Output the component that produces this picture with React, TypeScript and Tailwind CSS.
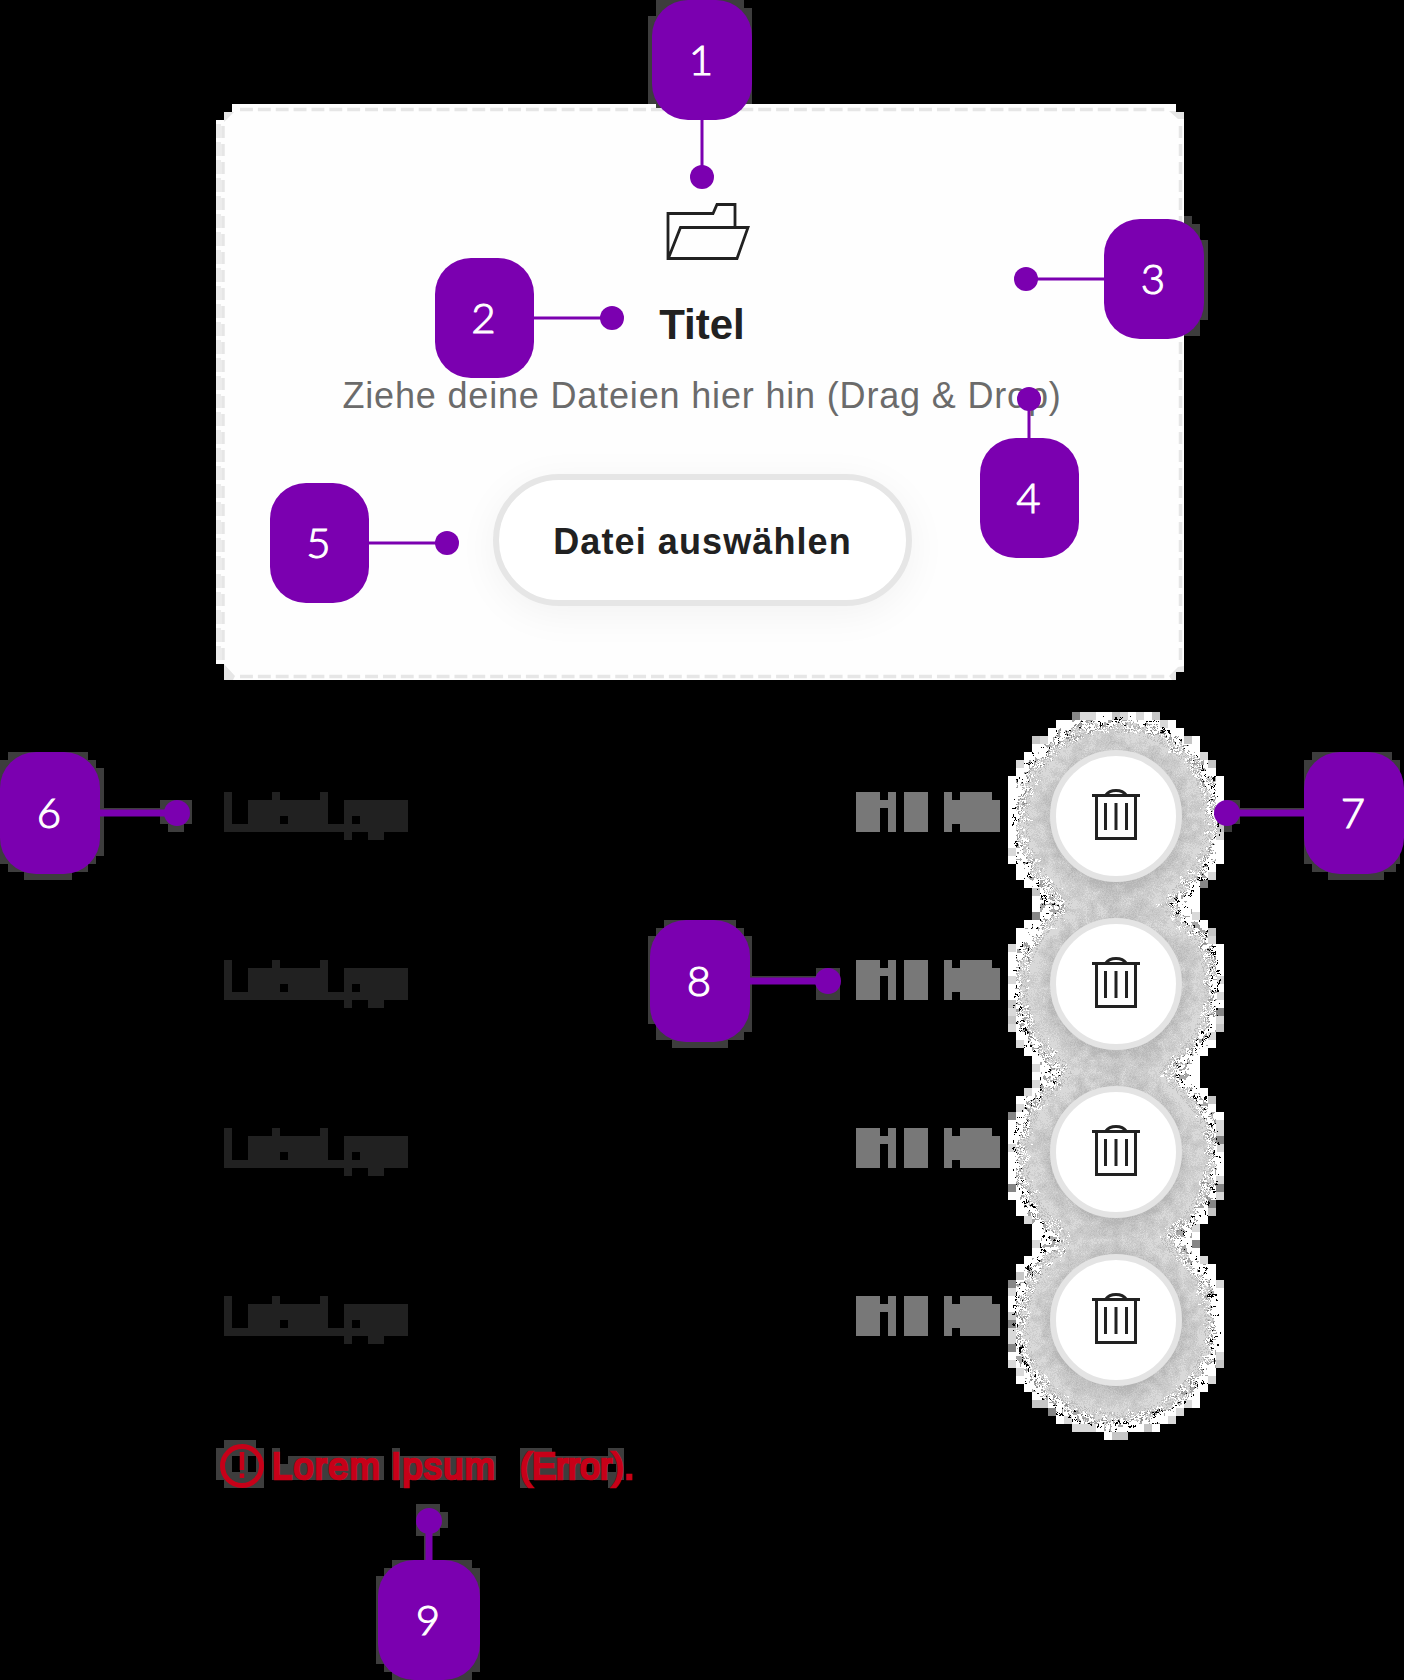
import { useMemo } from "react";

type Side = "top" | "right" | "bottom" | "left";

interface Marker {
  n: number;
  x: number;
  y: number;
  w: number;
  h: number;
  side: Side;
  dot: [number, number];
  line: number;
  r: number;
  halo?: [number, number, number, number][];
}

const MARKERS: Marker[] = [
  { n: 1, x: 652, y: 0, w: 100, h: 120, side: "bottom", dot: [702, 177], line: 3, r: 12,
    halo: [[648, 16, 104, 88], [656, 8, 96, 96], [656, 0, 88, 8], [744, 8, 8, 96], [656, 104, 16, 4]] },
  { n: 2, x: 435, y: 258, w: 99, h: 120, side: "right", dot: [612, 318], line: 3, r: 12 },
  { n: 3, x: 1104, y: 219, w: 100, h: 120, side: "left", dot: [1026, 279], line: 3, r: 12,
    halo: [[1184, 216, 8, 8], [1184, 224, 16, 112], [1200, 240, 8, 80]] },
  { n: 4, x: 980, y: 438, w: 99, h: 120, side: "top", dot: [1029, 399], line: 3, r: 12 },
  { n: 5, x: 270, y: 483, w: 99, h: 120, side: "right", dot: [447, 543], line: 3, r: 12 },
  { n: 6, x: 0, y: 752, w: 100, h: 122, side: "right", dot: [177, 813], line: 7, r: 13,
    halo: [[8, 752, 80, 8], [0, 760, 96, 8], [0, 768, 104, 88], [0, 856, 96, 8], [8, 864, 80, 8], [24, 872, 48, 8], [100, 808, 70, 8], [160, 800, 32, 24], [168, 824, 16, 8]] },
  { n: 7, x: 1304, y: 752, w: 100, h: 122, side: "left", dot: [1227, 813], line: 7, r: 13,
    halo: [[1312, 752, 80, 8], [1304, 760, 96, 104], [1312, 864, 84, 8], [1328, 872, 56, 8], [1224, 800, 16, 24], [1224, 824, 8, 8], [1240, 808, 64, 8]] },
  { n: 8, x: 650, y: 920, w: 100, h: 122, side: "right", dot: [828, 981], line: 7, r: 13,
    halo: [[664, 920, 72, 8], [656, 928, 88, 8], [648, 936, 104, 88], [656, 1024, 96, 8], [656, 1032, 88, 8], [672, 1040, 56, 8], [750, 976, 70, 8], [816, 968, 24, 32]] },
  { n: 9, x: 378, y: 1560, w: 102, h: 120, side: "top", dot: [429, 1521], line: 7, r: 13,
    halo: [[392, 1560, 80, 8], [384, 1568, 96, 8], [376, 1576, 104, 88], [384, 1664, 96, 8], [392, 1672, 80, 8], [416, 1504, 24, 32], [440, 1512, 8, 16], [424, 1536, 8, 24]] },
];

function stem(m: Marker): string {
  const cx = m.x + m.w / 2;
  const cy = m.y + m.h / 2;
  return m.side === "left" || m.side === "right"
    ? `M${cx} ${m.dot[1]}H${m.dot[0]}`
    : `M${m.dot[0]} ${cy}V${m.dot[1]}`;
}

function Markers() {
  return (
    <>
      <svg className="pointer-events-none absolute inset-0" width="1404" height="1680">
        {MARKERS.map((m) => (
          <g key={m.n}>
            {m.halo?.map(([x, y, w, h], i) => (
              <rect key={i} x={x} y={y} width={w} height={h} fill="#3d3d3d" shapeRendering="crispEdges" />
            ))}
            <path d={stem(m)} stroke="#7b00b0" strokeWidth={m.line} />
            <circle cx={m.dot[0]} cy={m.dot[1]} r={m.r} fill="#7b00b0" />
          </g>
        ))}
      </svg>
      {MARKERS.map((m) => (
        <div
          key={m.n}
          className="absolute flex items-center justify-center rounded-[36px] bg-[#7b00b0] pr-[2px] pb-[2px] font-[Lato,sans-serif] text-[42px] leading-none font-light text-white [-webkit-text-stroke:1.1px_#ffffff]"
          style={{ left: m.x, top: m.y, width: m.w, height: m.h }}
        >
          {m.n}
        </div>
      ))}
    </>
  );
}

function FolderIcon() {
  return (
    <svg className="h-[60px] w-[90px] overflow-visible" viewBox="0 0 90 60" fill="none" stroke="#212121" strokeWidth="2.8">
      <path d="M78 26V2.500H60L56 11.500H11V56.500H80L91 25.500H23.500L11.500 56" />
    </svg>
  );
}

function TrashIcon() {
  return (
    <svg className="h-[54px] w-[48px]" viewBox="0 0 48 54" fill="none" stroke="#212121" strokeWidth="3">
      <path d="M0 6.500H48M4.500 6.500V49.500H43.500V6.500M13.500 14V41M24 14V41M34.500 14V41" />
      <path d="M13.800 6C18 0 30 0 34.200 6" />
    </svg>
  );
}

function AlertIcon() {
  return (
    <svg className="h-[48px] w-[56px] shrink-0" viewBox="0 0 56 48" fill="none">
      <path d="M8 0H40V8H48V48H8V40H0V8H8Z" fill="#3d3d3d" />
      <path d="M16 16H24V32H16ZM32 16H40V32H32Z" fill="#000" />
      <circle cx="26" cy="26" r="19.500" stroke="#c70018" strokeWidth="5" />
      <path d="M26 12V30M26 33.500V38" stroke="#c70018" strokeWidth="4.500" />
    </svg>
  );
}

function rand(x: number, y: number): number {
  let h = Math.imul(x, 374761393) ^ Math.imul(y, 668265263);
  h = Math.imul(h ^ (h >>> 13), 1274126177);
  return ((h ^ (h >>> 16)) >>> 0) / 4294967295;
}

function smooth(x: number, y: number, s: number): number {
  const gx = Math.floor(x / s);
  const gy = Math.floor(y / s);
  const fx = x / s - gx;
  const fy = y / s - gy;
  const a = rand(gx, gy) * (1 - fx) + rand(gx + 1, gy) * fx;
  const b = rand(gx, gy + 1) * (1 - fx) + rand(gx + 1, gy + 1) * fx;
  return a * (1 - fy) + b * fy;
}

const SHADES = ["#000000", "#868686", "#a6a6a6", "#bdbdbd", "#c6c6c6", "#cecece", "#d9d9d9", "#ffffff"];
const GLOW_CENTERS = [108, 276, 444, 612];

// Grainy glow around the delete buttons, built from one-pixel runs per shade.
function Glow() {
  const paths = useMemo(() => {
    const out: string[][] = SHADES.map(() => []);
    const near = (x: number, y: number) =>
      Math.min(...GLOW_CENTERS.map((c) => Math.hypot(x - 108, y - c)));
    const mask: boolean[] = [];
    for (let r = 0; r < 91; r++)
      for (let c = 0; c < 27; c++) {
        let hit = false;
        for (const cy of GLOW_CENTERS) {
          const nx = Math.max(c * 8, Math.min(108, c * 8 + 8));
          const ny = Math.max(r * 8, Math.min(cy, r * 8 + 8));
          if (Math.hypot(nx - 108, ny - cy) < 107.8) hit = true;
        }
        if (r === 90) hit = c >= 12 && c <= 14;
        mask.push(hit);
      }
    const inside = (x: number, y: number) => {
      const c = Math.floor(x / 8);
      const r = Math.floor(y / 8);
      return c >= 0 && c < 27 && r >= 0 && r < 91 && mask[r * 27 + c];
    };
    for (let y = 0; y < 728; y++) {
      let start = 0;
      let cur = -1;
      for (let x = 0; x <= 216; x++) {
        let s = -1;
        if (x < 216 && inside(x, y)) {
          // Overlapping glows reinforce each other between two buttons.
          const sorted = GLOW_CENTERS.map((c) => Math.hypot(x - 108, y - c)).sort((a, b) => a - b);
          const d = near(x, y) - Math.max(0, 112 - sorted[1]) * 0.35;
          const n = rand(x, y);
          const edge = !inside(x - 8, y) || !inside(x + 8, y) || !inside(x, y - 8) || !inside(x, y + 8);
          const t = (d - 86) / 20 + (smooth(x, y, 4) - 0.5) * 0.9 + (n - 0.5) * 0.25;
          if (edge && d > 101) {
            const k = rand((x >> 3) + 91, (y >> 3) + 17);
            s = k > 0.42 ? 7 : k > 0.2 ? 6 : k > 0.08 ? 4 : 1;
            if (d < 105 && smooth(x + 400, y, 3) > 0.66 && n > 0.5) s = 0;
          } else if (t > 0.62) {
            s = d > 95 && smooth(x + 400, y, 3) > 0.7 && n > 0.5 ? 0 : smooth(x, y + 300, 3) > 0.72 ? 2 : 7;
          } else if (t > 0.4) {
            s = n > 0.62 ? 7 : n > 0.38 ? 6 : n > 0.16 ? 2 : 1;
          } else {
            const v = smooth(x, y, 6) * 0.6 + n * 0.4 + (d - 78) / 60;
            s = v < 0.2 ? 3 : v < 0.42 ? 4 : v < 0.65 ? 5 : 6;
            if (d > 88 && v > 0.4 && n < 0.3) s = 3;
          }
        }
        if (s !== cur) {
          if (cur >= 0) out[cur].push(`M${start} ${y}h${x - start}v1h-${x - start}z`);
          start = x;
          cur = s;
        }
      }
    }
    return out.map((p) => p.join(""));
  }, []);
  return (
    <svg className="pointer-events-none absolute top-[-20px] left-[792px]" width="216" height="728" shapeRendering="crispEdges">
      {paths.map((d, i) => (
        <path key={i} d={d} fill={SHADES[i]} />
      ))}
    </svg>
  );
}

function FileRow() {
  return (
    <div className="relative flex h-[168px] items-center">
      <div className="flex h-[48px] w-[184px] items-center bg-[#212121] pb-[10px] text-[40px] leading-none tracking-[1px] text-[#212121] [clip-path:path(evenodd,'M0,0H8V32H24V8H48V0H56V8H96V0H104V32H120V8H184V40H160V48H144V40H128V48H120V40H0ZM56,24H64V32H56ZM128,24H136V32H128Z')]">
        Label.pgn
      </div>
      <div className="ml-[448px] flex h-[48px] w-[144px] items-center bg-[#787878] pb-[10px] text-[40px] leading-none whitespace-nowrap text-[#787878] [clip-path:path('M0,0H24V8H32V0H40V40H32V16H24V40H0ZM48,0H72V40H48ZM88,0H96V8H104V0H136V8H144V40H104V32H96V40H88Z')]">
        512 KB
      </div>
      <button className="relative ml-[50px] flex size-[132px] items-center justify-center rounded-full border-[6px] border-[#e4e4e4] bg-white shadow-[0_5px_12px_rgba(0,0,0,0.06)]">
        <TrashIcon />
      </button>
    </div>
  );
}

function DropZone() {
  return (
    <section className="relative h-[576px] w-[968px] bg-[#fefefe] [clip-path:polygon(16px_0,960px_0,960px_8px,968px_8px,968px_568px,960px_568px,960px_576px,8px_576px,8px_560px,0_560px,0_16px,8px_16px,8px_8px,16px_8px)]">
      <svg className="absolute inset-0" width="968" height="576" fill="none" stroke="#e6e6e6">
        <path d="M24 5.500H950" strokeWidth="3.500" strokeDasharray="12.900 4.970" />
        <path d="M24 572.500H950" strokeWidth="3.500" strokeDasharray="12.900 4.970" />
        <path d="M964.500 22V556" strokeWidth="3.500" strokeDasharray="12 6" />
        <path d="M2.500 20V560" stroke="#ececec" strokeWidth="5" strokeDasharray="14 4" />
        <path d="M7 22V560" strokeWidth="3.500" strokeDasharray="12 6" />
        <path d="M8 8H18L8 18ZM953 7H968V15H962ZM8 560L19 572L17 576H8ZM962 563L953 572L956 576H960V568H968V562Z" fill="#e6e6e6" stroke="none" />
      </svg>
      <div className="relative flex flex-col items-center pt-[98px] pl-[4px]">
        <FolderIcon />
        <h2 className="mt-[39px] text-[42px] leading-[48px] font-bold text-[#212121]">Titel</h2>
        <p className="mt-[26px] text-[36px] leading-[42px] tracking-[0.83px] whitespace-nowrap text-[#6b6b6b]">
          Ziehe deine Dateien hier hin (Drag &amp; Drop)
        </p>
        <button className="mt-[57px] flex h-[132px] w-[419px] items-center justify-center rounded-[66px] border-[6px] border-[#e6e6e6] bg-white pt-[4px] pl-[1px] text-[36px] font-bold tracking-[1.1px] text-[#212121] shadow-[0_8px_40px_rgba(0,0,0,0.05)]">
          Datei auswählen
        </button>
      </div>
    </section>
  );
}

export default function App() {
  return (
    <main className="relative h-[1680px] w-[1404px] overflow-hidden bg-black pt-[104px] pl-[216px] font-['Liberation_Sans',Arial,sans-serif]">
      <DropZone />
      <section className="relative mt-[52px] pl-[8px]">
        <Glow />
        <FileRow />
        <FileRow />
        <FileRow />
        <FileRow />
      </section>
      <div className="mt-[36px] flex h-[48px]">
        <AlertIcon />
        <div className="relative flex h-[48px] w-[376px] text-[36px] leading-[48px] whitespace-pre text-[#c70018]">
          <svg className="absolute inset-0" width="376" height="48" fill="#3d3d3d" shapeRendering="crispEdges">
            <path d="M0 8H8V24H16V16H112V40H0ZM120 8H128V16H224V40H136V48H128V40H120ZM248 8H280V16H336V8H352V40H344V48H336V40H256V48H248Z" />
            <path d="M312 24H320V32H312ZM336 24H344V32H336Z" fill="#000" />
          </svg>
          <p className="relative top-[3px] flex [-webkit-text-stroke:2.6px_#c70018]">
            <span className="w-[119px] shrink-0 tracking-[1.4px]">Lorem </span>
            <span className="w-[129px] shrink-0 tracking-[1.4px]">Ipsum  </span>
            <span className="tracking-[0px]">(Error).</span>
          </p>
        </div>
      </div>
      <Markers />
    </main>
  );
}
